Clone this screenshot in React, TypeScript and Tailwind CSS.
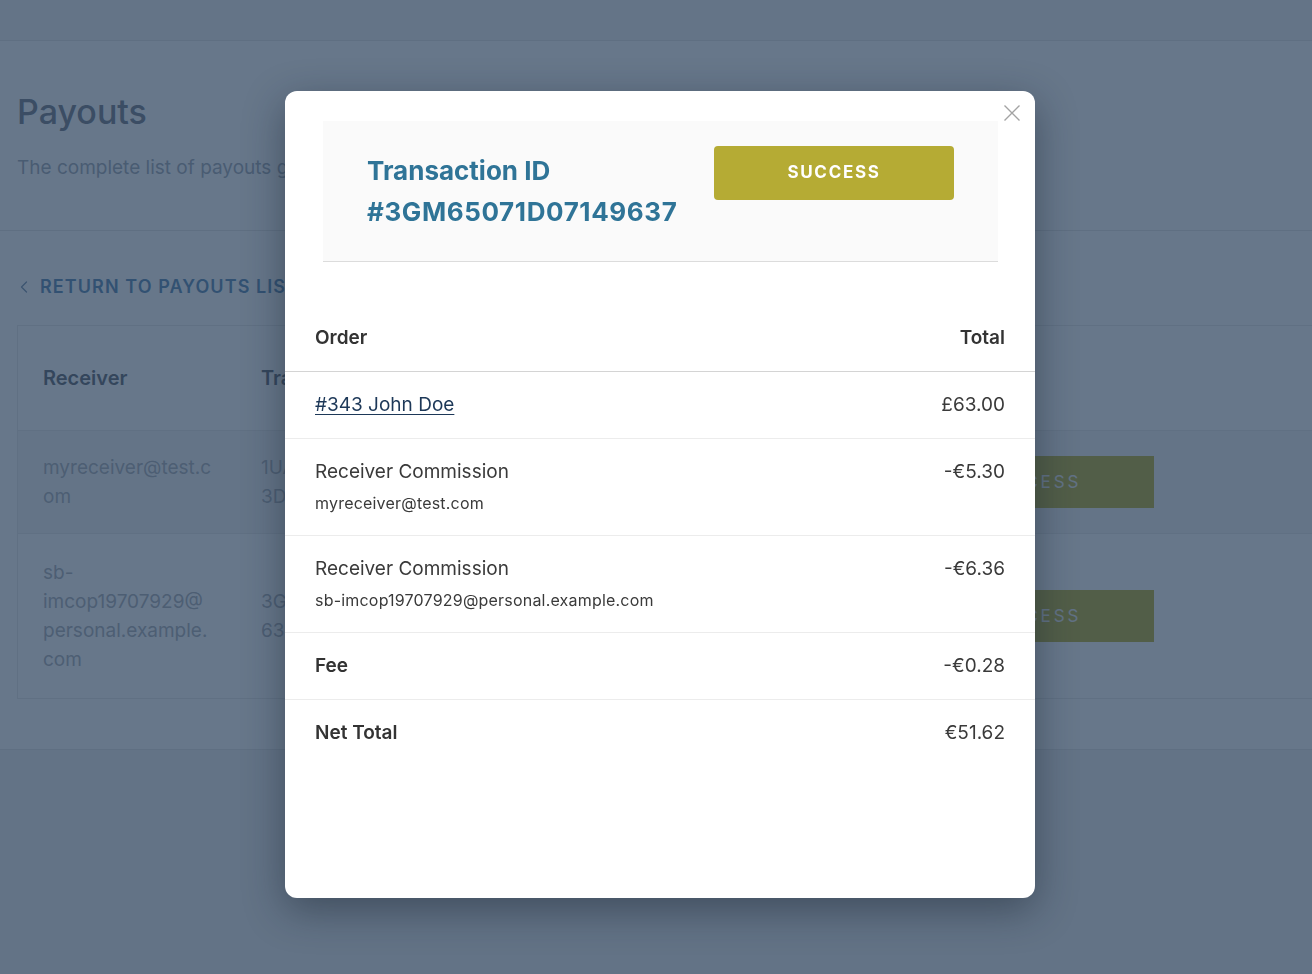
import { ChevronLeft } from 'lucide-react'

const LINES = [
  { label: 'Receiver Commission', sub: 'myreceiver@test.com', amount: '-€5.30' },
  { label: 'Receiver Commission', sub: 'sb-imcop19707929@personal.example.com', amount: '-€6.36' },
]

const PAYOUTS = [
  { receiver: ['myreceiver@test.c', 'om'], tx: ['1UA47158RJ', '3D836814X'], amount: '€43.22', striped: true },
  { receiver: ['sb-', 'imcop19707929@', 'personal.example.', 'com'], tx: ['3GM65071D0', '6349637'], amount: '€51.62', striped: false },
]

function PayoutsPage() {
  return (
    <div className="min-h-screen bg-white flex flex-col">
      <div className="h-[41px] bg-[#f5f5f5] border-b border-[#e3e3e3]" />

      {/* Title */}
      <div className="px-[17px] pt-[49px] pb-[48px] border-b border-[#e3e3e3]">
        <h1 className="text-[34px] leading-[44px] font-medium text-[#6b7280]">Payouts</h1>
        <p className="mt-[20px] text-[19px] leading-[28px] text-[#9ca3af] whitespace-nowrap">
          The complete list of payouts generated through your marketplace.
        </p>
      </div>

      <div className="pt-[42px] pb-[50px] border-b border-[#e3e3e3]">
        <a className="flex items-center gap-[6px] pl-[14px] text-[18px] leading-[28px] font-semibold tracking-[0.06em] text-[#4f7fae] uppercase">
          <ChevronLeft className="w-[20px] h-[20px] text-[#6f8aa8]" strokeWidth={1.5} />
          Return to payouts list
        </a>

        {/* Payouts table */}
        <div className="mt-[24px] ml-[17px] border-l border-y border-[#e6e6e6]">
          <div className="grid grid-cols-[218px_320px_321px_252px] pl-[25px] py-[38px] text-[20px] leading-[28px] font-semibold text-[#565b66]">
            <div>Receiver</div>
            <div>Transaction ID</div>
            <div>Amount</div>
            <div>Status</div>
          </div>
          {PAYOUTS.map((p, i) => (
            <div
              key={i}
              className={`grid grid-cols-[218px_320px_321px_252px] items-center pl-[25px] border-t border-[#e6e6e6] text-[19px] leading-[29px] text-[#a7abb2] ${p.striped ? 'bg-[#f6f6f6] py-[22px]' : 'bg-white py-[24px]'}`}
            >
              <div>{p.receiver.map(l => <div key={l}>{l}</div>)}</div>
              <div>{p.tx.map(l => <div key={l}>{l}</div>)}</div>
              <div>{p.amount}</div>
              <div className="h-[52px] bg-[#b8aa22] flex items-center justify-center pl-[6px] text-[#eeeeee] text-[17px] tracking-[0.17em]">SUCCESS</div>
            </div>
          ))}
        </div>
      </div>

      <div className="flex-1 bg-[#f0f0f0]" />
    </div>
  )
}

export default function App() {
  return (
    <div className="relative min-h-screen font-['Inter',sans-serif]">
      <PayoutsPage />

      <div className="fixed inset-0 bg-[rgba(39,61,88,0.7)]" />

      {/* Modal */}
      <div className="absolute left-[285px] top-[91px] w-[750px] h-[807px] rounded-[12px] bg-white shadow-[0_12px_40px_rgba(20,30,45,0.45)]">
        <button className="absolute right-[15px] top-[14px]">
          <svg viewBox="0 0 16 16" className="w-[16px] h-[16px]" fill="none" stroke="#a3a3a3" strokeWidth={1.4}>
            <path d="M0.5 0.5L15.5 15.5M15.5 0.5L0.5 15.5" />
          </svg>
        </button>

        <div className="ml-[38px] mr-[37px] mt-[30px] flex justify-between items-start bg-[#fafafa] border-b border-[#dcdcdc] px-[44px] pt-[25px] pb-[29px]">
          <div className="mt-[4px] text-[26px] leading-[41px] font-bold text-[#2f7497]">
            <div>Transaction ID</div>
            <div className="tracking-[0.6px]">#3GM65071D07149637</div>
          </div>
          <div className="w-[240px] h-[54px] rounded-[4px] bg-[#b5ab34] flex items-center justify-center text-white text-[17px] font-bold tracking-[0.1em]">
            SUCCESS
          </div>
        </div>

        <div className="mt-[40px]">
          <div className="flex justify-between px-[30px] pt-[24px] pb-[21px] border-b border-[#d4d4d4] text-[19px] leading-[24px] font-semibold text-[#333]">
            <span>Order</span>
            <span>Total</span>
          </div>

          <div className="flex justify-between px-[30px] py-[21px] border-b border-[#ececec] text-[19px] leading-[24px] text-[#3a3a3a]">
            <a className="underline underline-offset-[3px] text-[#1d3858]">#343 John Doe</a>
            <span>£63.00</span>
          </div>

          {LINES.map((l, i) => (
            <div key={i} className="flex justify-between px-[30px] py-[21px] border-b border-[#ececec] text-[#3a3a3a]">
              <div>
                <div className="text-[19px] leading-[24px]">{l.label}</div>
                <div className="mt-[8px] text-[16px] leading-[22px] tracking-[0.2px]">{l.sub}</div>
              </div>
              <span className="text-[19px] leading-[24px]">{l.amount}</span>
            </div>
          ))}

          <div className="flex justify-between px-[30px] py-[21px] border-b border-[#ececec] text-[19px] leading-[24px] text-[#3a3a3a]">
            <span className="font-semibold text-[#333]">Fee</span>
            <span>-€0.28</span>
          </div>

          <div className="flex justify-between px-[30px] py-[21px] text-[19px] leading-[24px] text-[#3a3a3a]">
            <span className="font-semibold text-[#333]">Net Total</span>
            <span>€51.62</span>
          </div>
        </div>
      </div>
    </div>
  )
}
